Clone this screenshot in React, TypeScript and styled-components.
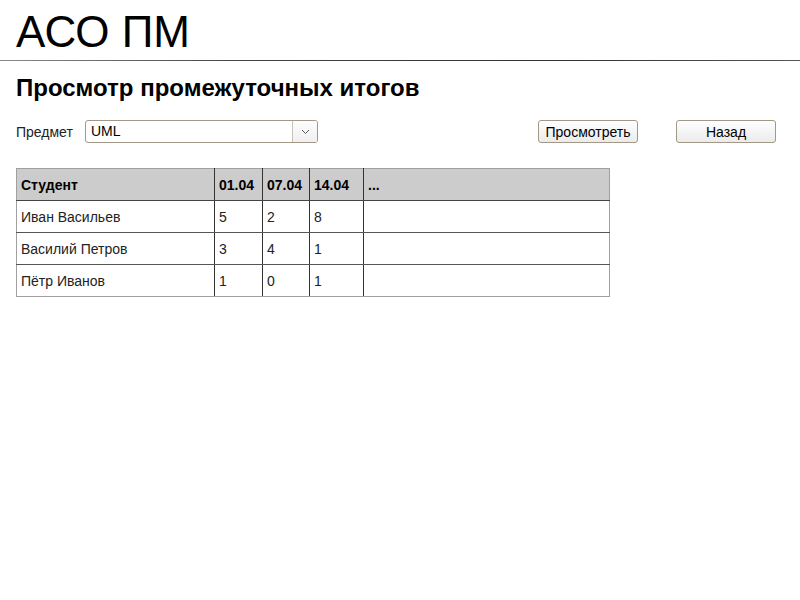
import React from "react";
import styled, { createGlobalStyle } from "styled-components";

const Global = createGlobalStyle`
  html, body { margin: 0; padding: 0; background: #fff; }
  body { font-family: "Liberation Sans", Arial, sans-serif; color: #000; }
`;

const Page = styled.div`
  width: 800px;
  min-height: 600px;
`;

const Header = styled.header`
  padding: 7px 16px 0;
  height: 60px;
  box-sizing: border-box;
`;

const Title = styled.h1`
  margin: 0;
  font-size: 44px;
  line-height: 50px;
  font-weight: normal;
`;

const Rule = styled.div`
  height: 1px;
  background: linear-gradient(to right, #8a8a8a, #444 30%, #333 70%, #555);
`;

const Main = styled.main`
  padding: 14px 16px 0;
`;

const Subtitle = styled.h2`
  margin: 0;
  font-size: 24px;
  line-height: 26px;
  font-weight: bold;
`;

const FormRow = styled.div`
  display: flex;
  align-items: center;
  margin-top: 19px;
  height: 23px;
`;

const Label = styled.label`
  width: 69px;
  font-size: 14px;
  color: #222;
`;

const Select = styled.div`
  width: 233px;
  height: 23px;
  box-sizing: border-box;
  border: 1px solid #a39887;
  border-radius: 3px;
  display: flex;
  background: #fff;
`;

const SelectValue = styled.div`
  flex: 1;
  padding-left: 5px;
  font-size: 14px;
  line-height: 21px;
`;

const SelectArrow = styled.div`
  width: 24px;
  border-left: 1px solid #c9c2b8;
  display: flex;
  align-items: center;
  justify-content: center;
  background: linear-gradient(#fdfdfd, #f0f0f0);
  border-radius: 0 2px 2px 0;
`;

const Actions = styled.div`
  display: flex;
  gap: 38px;
  margin-left: 220px;
`;

const Button = styled.button`
  width: 100px;
  height: 23px;
  box-sizing: border-box;
  border: 1px solid #a39887;
  border-radius: 3px;
  background: linear-gradient(#ffffff, #ebebeb);
  font-family: "Liberation Sans", Arial, sans-serif;
  font-size: 14px;
  color: #000;
  padding: 0;
`;

const Table = styled.table`
  margin-top: 25px;
  border-collapse: collapse;
  width: 593px;
  font-size: 14px;
  table-layout: fixed;
  border: 1px solid #a0a0a0;
  color: #222;
`;

const Th = styled.th<{ $w: number }>`
  width: ${(p) => p.$w}px;
  height: 32px;
  box-sizing: border-box;
  background: #cccccc;
  text-align: left;
  padding: 0 4px;
  font-weight: bold;
  color: #000;
  border-left: 1px solid #333;
  border-bottom: 1px solid #444;
  &:first-child { border-left: 1px solid #a0a0a0; }
`;

const Td = styled.td`
  height: 32px;
  box-sizing: border-box;
  padding: 0 4px;
  border-left: 1px solid #333;
  border-bottom: 1px solid #555;
  &:first-child { border-left: 1px solid #a0a0a0; }
`;

const Row = styled.tr`
  &:last-child td { border-bottom: 1px solid #a0a0a0; }
`;

const cols = [
  { t: "Студент", w: 198 },
  { t: "01.04", w: 48 },
  { t: "07.04", w: 47 },
  { t: "14.04", w: 54 },
  { t: "...", w: 246 },
];

const rows = [
  ["Иван Васильев", "5", "2", "8", ""],
  ["Василий Петров", "3", "4", "1", ""],
  ["Пётр Иванов", "1", "0", "1", ""],
];

export default function App() {
  return (
    <Page>
      <Global />
      <Header>
        <Title>АСО ПМ</Title>
      </Header>
      <Rule />
      <Main>
        <Subtitle>Просмотр промежуточных итогов</Subtitle>
        <FormRow>
          <Label>Предмет</Label>
          <Select>
            <SelectValue>UML</SelectValue>
            <SelectArrow>
              <svg width="9" height="6" viewBox="0 0 9 6">
                <path d="M1 1 L4.5 4.5 L8 1" fill="none" stroke="#555" strokeWidth="1" />
              </svg>
            </SelectArrow>
          </Select>
          <Actions>
            <Button>Просмотреть</Button>
            <Button>Назад</Button>
          </Actions>
        </FormRow>
        <Table>
          <thead>
            <tr>
              {cols.map((c) => (
                <Th key={c.t} $w={c.w}>{c.t}</Th>
              ))}
            </tr>
          </thead>
          <tbody>
            {rows.map((r) => (
              <Row key={r[0]}>
                {r.map((v, i) => (
                  <Td key={i}>{v}</Td>
                ))}
              </Row>
            ))}
          </tbody>
        </Table>
      </Main>
    </Page>
  );
}
